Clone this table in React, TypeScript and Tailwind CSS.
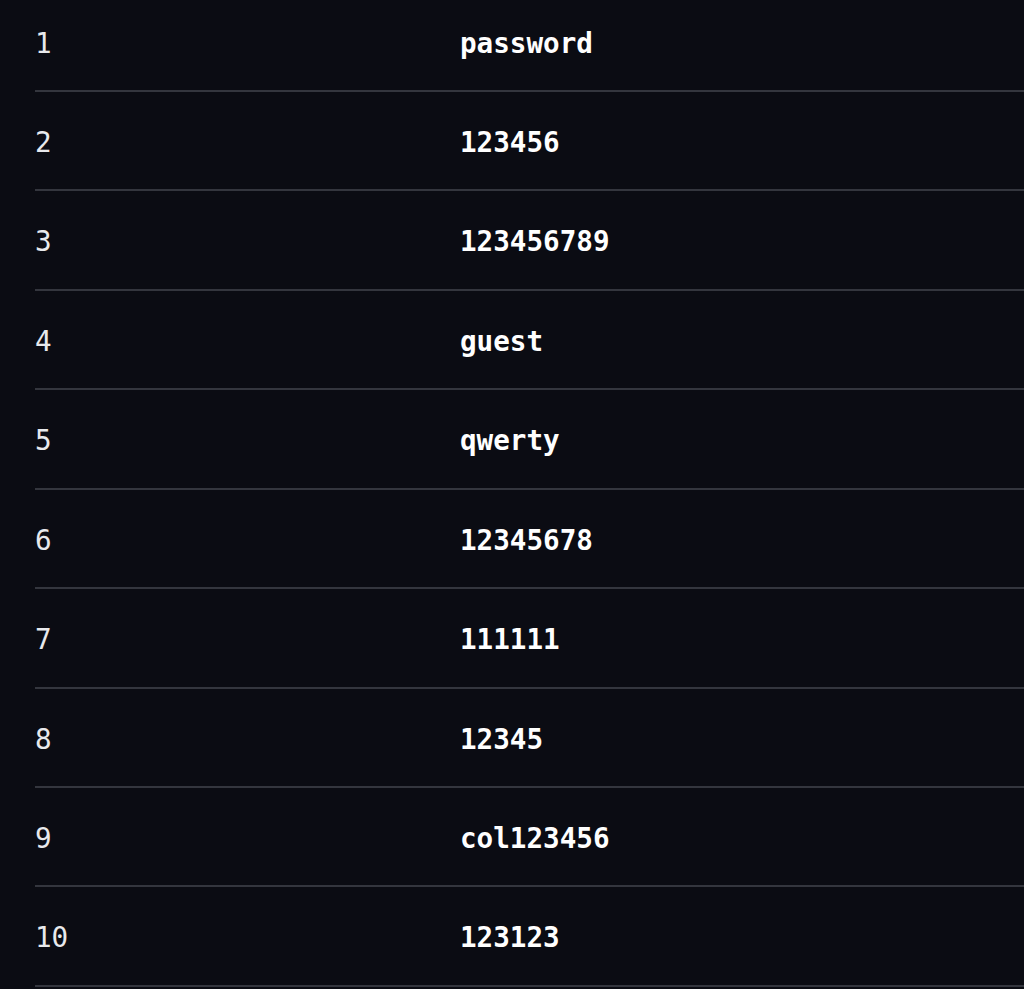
import React from "react";

const rows = [
  "password",
  "123456",
  "123456789",
  "guest",
  "qwerty",
  "12345678",
  "111111",
  "12345",
  "col123456",
  "123123",
];

export default function App() {
  return (
    <div className="w-[1024px] h-[989px] overflow-hidden bg-[#0b0c13]">
      <div
        className="mt-[-7.5px] pl-[35px]"
        style={{ fontFamily: '"DejaVu Sans Mono", "Liberation Mono", monospace' }}
      >
        {rows.map((pw, i) => (
          <div
            key={i}
            className="flex items-center h-[99.44px] pt-[4px] border-b-2 border-[#34363e]"
          >
            <div className="w-[425px] text-[27.6px] text-[#e8e9ec] font-normal">
              {i + 1}
            </div>
            <div className="text-[27.6px] text-white font-bold">{pw}</div>
          </div>
        ))}
      </div>
    </div>
  );
}
